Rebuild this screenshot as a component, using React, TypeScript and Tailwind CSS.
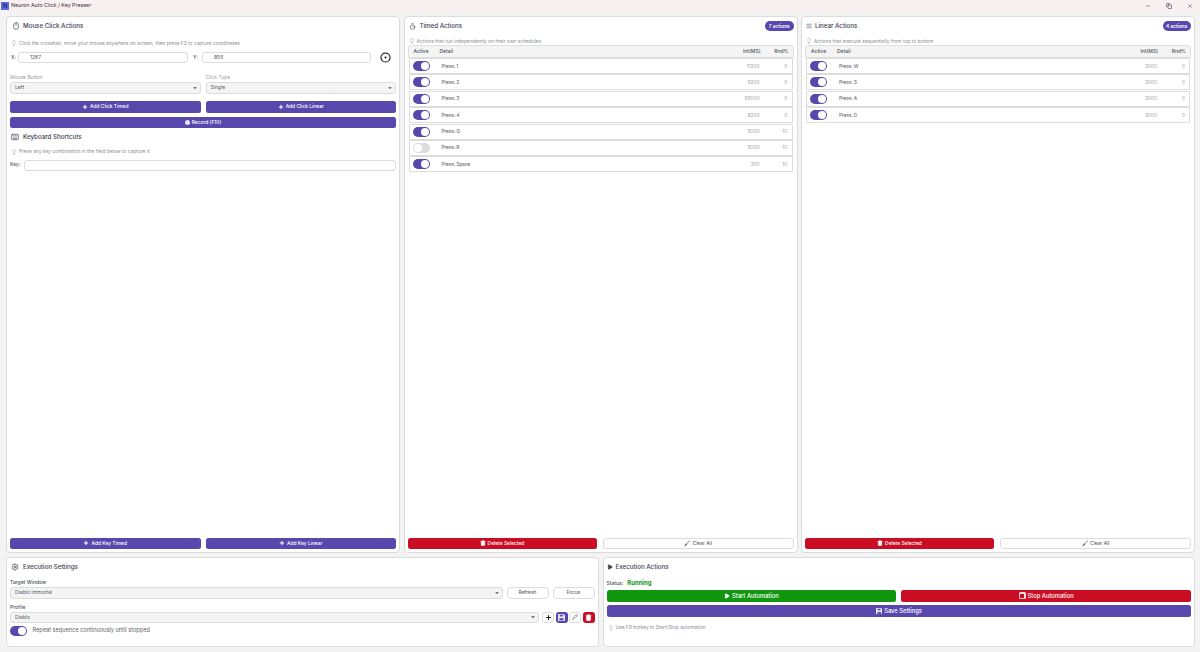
import {
  AlignJustify,
  CircleDot,
  Copy,
  Keyboard,
  Lightbulb,
  Minus,
  Mouse,
  Pencil,
  Play,
  Plus,
  Settings,
  Timer,
  Trash2,
  X,
} from "lucide-react";
import type { ReactNode } from "react";

type Row = { detail: string; interval: string; rnd: string; on?: boolean };

const timedRows: Row[] = [
  { detail: "Press: 1", interval: "11200", rnd: "0", on: true },
  { detail: "Press: 2", interval: "6200", rnd: "0", on: true },
  { detail: "Press: 3", interval: "55000", rnd: "0", on: true },
  { detail: "Press: 4", interval: "8200", rnd: "0", on: true },
  { detail: "Press: Q", interval: "5000", rnd: "10", on: true },
  { detail: "Press: R", interval: "5000", rnd: "10", on: false },
  { detail: "Press: Space", interval: "300", rnd: "10", on: true },
];

const linearRows: Row[] = [
  { detail: "Press: W", interval: "2000", rnd: "0", on: true },
  { detail: "Press: S", interval: "2000", rnd: "0", on: true },
  { detail: "Press: A", interval: "2000", rnd: "0", on: true },
  { detail: "Press: D", interval: "2000", rnd: "0", on: true },
];

function Toggle({ on = true }: { on?: boolean }) {
  return (
    <div
      className={
        on
          ? "flex h-[10px] w-[17px] shrink-0 items-center justify-end rounded-full bg-[#5848ae] pr-[1px]"
          : "flex h-[10px] w-[17px] shrink-0 items-center justify-start rounded-full bg-[#dddddd] pl-[1px]"
      }
    >
      <div className="h-[8px] w-[8px] rounded-full bg-white" />
    </div>
  );
}

function Hint({ children }: { children: ReactNode }) {
  return (
    <div className="flex items-center gap-[2px] text-[4.85px] leading-none text-[#8a8f96]">
      <Lightbulb className="h-[6px] w-[6px]" strokeWidth={1.5} />
      <span>{children}</span>
    </div>
  );
}

function CardTitle({ icon, title, iconWidth }: { icon: ReactNode; title: string; iconWidth: string }) {
  return (
    <div className="flex items-center text-[#3a4250]">
      <div className={`flex items-center ${iconWidth}`}>{icon}</div>
      <span className="text-[6.2px] font-medium leading-none">{title}</span>
    </div>
  );
}

function Action({ color, icon, label }: { color: string; icon: ReactNode; label: string }) {
  return (
    <button className={`flex h-[11.5px] min-w-0 flex-1 items-center justify-center gap-[2px] rounded-[2.5px] font-medium leading-none text-white ${color}`}>
      {icon}
      {label}
    </button>
  );
}

function Select({ value }: { value: string }) {
  return (
    <div className="flex h-[11.5px] min-w-0 flex-1 items-center justify-between rounded-[3px] border border-[#dcdcdc] bg-[#f4f4f4] pl-[4px] pr-[3px] text-[5px] leading-none text-[#555b63]">
      <span>{value}</span>
      <svg viewBox="0 0 6 4" className="h-[2.5px] w-[4px] text-[#777777]">
        <polygon points="0,0 6,0 3,4" fill="currentColor" />
      </svg>
    </div>
  );
}

function Outline({ children, className = "" }: { children: ReactNode; className?: string }) {
  return (
    <button className={`flex h-[11.5px] items-center justify-center gap-[2px] rounded-[3px] border border-[#dcdcdc] bg-white text-[4.9px] leading-none text-[#4a4f57] ${className}`}>
      {children}
    </button>
  );
}

function Floppy({ bg, size }: { bg: string; size: string }) {
  return (
    <svg viewBox="0 0 10 10" className={size}>
      <path d="M1 0h7l2 2v7a1 1 0 0 1-1 1H1a1 1 0 0 1-1-1V1a1 1 0 0 1 1-1z" fill="#eeecf8" />
      <rect x="2.5" y="1" width="4.5" height="2.5" fill={bg} />
      <rect x="2" y="6" width="6" height="3" fill={bg} />
    </svg>
  );
}

function Broom() {
  return (
    <svg viewBox="0 0 10 10" className="h-[6.5px] w-[6.5px] text-[#4a4f57]">
      <path d="M9 0.5L4 6" stroke="currentColor" strokeWidth="1" />
      <path d="M3.4 5L5 6.6L2 9.6L0.5 9.6z" fill="currentColor" />
    </svg>
  );
}

function ActionTable({ rows }: { rows: Row[] }) {
  return (
    <div className="mt-[1px] flex flex-col">
      <div className="flex h-[13px] items-center rounded-t-[3px] border border-[#dfdfdf] bg-[#f4f4f4] text-[5px] font-medium leading-none text-[#4a5059]">
        <span className="ml-[5px] w-[26px]">Active</span>
        <span className="flex-1">Detail</span>
        <span className="w-[30px] text-right">Int(MS)</span>
        <span className="mr-[4px] w-[28px] text-right">Rnd%</span>
      </div>
      {rows.map((r) => (
        <div key={r.detail} className="mx-[1px] mb-[0.4px] flex h-[16px] items-center rounded-[1px] border border-[#dcdcdc] bg-white text-[5px] leading-none">
          <div className="ml-[3px] w-[29px]">
            <Toggle on={r.on} />
          </div>
          <span className="flex-1 tracking-[-0.2px] text-[#5c6167]">{r.detail}</span>
          <span className="w-[30px] text-right tracking-[-0.1px] text-[#a2a5a9]">{r.interval}</span>
          <span className="mr-[4px] w-[28px] text-right text-[#a2a5a9]">{r.rnd}</span>
        </div>
      ))}
    </div>
  );
}

function ListCard({ icon, iconWidth, title, hint, rows, count }: { icon: ReactNode; iconWidth: string; title: string; hint: string; rows: Row[]; count: string }) {
  return (
    <section className="flex min-w-0 flex-1 flex-col rounded-[4px] border border-[#dcdcdc] bg-white px-[3px] pb-[3px] pt-[4px]">
      <div className="flex h-[10px] items-center justify-between pl-[1px]">
        <CardTitle icon={icon} iconWidth={iconWidth} title={title} />
        <span className="flex h-[10px] w-[28.5px] items-center justify-center rounded-full bg-[#5848ae] text-[4.8px] font-semibold leading-none text-white">{count}</span>
      </div>
      <div className="mt-[7px] pl-[1px]">
        <Hint>{hint}</Hint>
      </div>
      <ActionTable rows={rows} />
      <div className="mt-auto flex gap-[6px]">
        <Action
          color="bg-[#cb0d24] text-[4.9px]"
          icon={<Trash2 className="h-[6px] w-[6px] fill-current" strokeWidth={2} />}
          label="Delete Selected"
        />
        <Outline className="min-w-0 flex-1">
          <Broom />
          Clear All
        </Outline>
      </div>
    </section>
  );
}

export default function App() {
  const plus = <Plus className="h-[6px] w-[6px]" strokeWidth={4} />;

  return (
    <div className="flex h-[652px] w-[1200px] flex-col overflow-hidden bg-[#f3f3f3] font-['Inter',sans-serif] antialiased">
      {/* Title bar */}
      <header className="flex h-[11px] items-center bg-[#f9f1f1]">
        <div className="ml-[1px] flex h-[8px] w-[8px] items-center justify-center bg-[#5b6ee0] text-[6px] font-bold leading-none text-[#2a2f8f]">N</div>
        <span className="ml-[2px] text-[5.3px] leading-none text-[#333333]">Neuron Auto Click / Key Presser</span>
        <div className="ml-auto flex items-center gap-[15px] pr-[7px] text-[#444444]">
          <Minus className="h-[6px] w-[6px]" />
          <Copy className="h-[6px] w-[6px]" strokeWidth={2.5} />
          <X className="h-[6px] w-[6px]" />
        </div>
      </header>

      <main className="flex min-h-0 flex-1 flex-col gap-[4px] pb-[5px] pl-[6px] pr-[5px] pt-[5px]">
        <div className="flex min-h-0 flex-1 gap-[3.5px]">
          {/* Mouse click actions */}
          <section className="flex min-w-0 flex-1 flex-col rounded-[4px] border border-[#dcdcdc] bg-white px-[3px] pb-[3px] pt-[4px]">
            <div className="flex h-[10px] items-center pl-[2px]">
              <CardTitle icon={<Mouse className="h-[8px] w-[8px]" />} iconWidth="w-[11px]" title="Mouse Click Actions" />
            </div>
            <div className="mt-[9px] pl-[1px]">
              <Hint>Click the crosshair, move your mouse anywhere on screen, then press F2 to capture coordinates</Hint>
            </div>
            <div className="mt-[6px] flex items-center text-[5px] font-medium text-[#555b63]">
              <span className="w-[8px] pl-[1px]">X:</span>
              <div className="flex h-[11px] w-[170px] items-center rounded-[3px] border border-[#dcdcdc] pl-[11px] text-[5px] font-normal">1267</div>
              <span className="ml-[5px] w-[9px]">Y:</span>
              <div className="flex h-[11px] w-[169px] items-center rounded-[3px] border border-[#dcdcdc] pl-[11px] text-[5px] font-normal">855</div>
              <CircleDot className="ml-[9px] h-[11px] w-[11px] text-black" strokeWidth={2.2} />
            </div>
            <div className="mt-[12px] flex gap-[5px] text-[5px] leading-none text-[#9a9da2]">
              <span className="flex-1">Mouse Button</span>
              <span className="flex-1">Click Type</span>
            </div>
            <div className="mt-[2px] flex gap-[5px]">
              <Select value="Left" />
              <Select value="Single" />
            </div>
            <div className="mt-[7.5px] flex gap-[5px]">
              <Action color="bg-[#5848ae] text-[4.9px]" icon={plus} label="Add Click Timed" />
              <Action color="bg-[#5848ae] text-[4.9px]" icon={plus} label="Add Click Linear" />
            </div>
            <div className="mt-[4px] flex">
              <Action color="bg-[#5848ae] text-[4.9px]" icon={<span className="h-[5px] w-[5px] rounded-full bg-[#e6e3f5]" />} label="Record (F10)" />
            </div>
            <div className="mt-[4px] flex h-[10px] items-center pl-[1px]">
              <CardTitle icon={<Keyboard className="h-[8px] w-[8px]" />} iconWidth="w-[12px]" title="Keyboard Shortcuts" />
            </div>
            <div className="mt-[6.5px] pl-[1px]">
              <Hint>Press any key combination in the field below to capture it</Hint>
            </div>
            <div className="mt-[5px] flex items-center text-[5px] font-medium text-[#555b63]">
              <span className="w-[14px]">Key:</span>
              <div className="h-[11px] flex-1 rounded-[3px] border border-[#dcdcdc]" />
            </div>
            <div className="mt-auto flex gap-[5px]">
              <Action color="bg-[#5848ae] text-[4.9px]" icon={plus} label="Add Key Timed" />
              <Action color="bg-[#5848ae] text-[4.9px]" icon={plus} label="Add Key Linear" />
            </div>
          </section>

          <ListCard
            icon={<Timer className="h-[7px] w-[7px]" />}
            iconWidth="w-[11px]"
            title="Timed Actions"
            hint="Actions that run independently on their own schedules"
            rows={timedRows}
            count="7 actions"
          />
          <ListCard
            icon={<AlignJustify className="h-[6px] w-[6px]" />}
            iconWidth="w-[9px]"
            title="Linear Actions"
            hint="Actions that execute sequentially from top to bottom"
            rows={linearRows}
            count="4 actions"
          />
        </div>

        <div className="flex h-[90px] shrink-0 gap-[4px]">
          {/* Execution settings */}
          <section className="flex min-w-0 flex-1 flex-col rounded-[4px] border border-[#dcdcdc] bg-white px-[3px] pt-[4px]">
            <div className="flex h-[10px] items-center pl-[1px]">
              <CardTitle icon={<Settings className="h-[8px] w-[8px]" />} iconWidth="w-[12px]" title="Execution Settings" />
            </div>
            <span className="mt-[8px] text-[5px] font-medium leading-none text-[#4a5059]">Target Window</span>
            <div className="mt-[2px] flex items-center gap-[4px]">
              <Select value="Diablo Immortal" />
              <Outline className="w-[42px] rounded-[4px]">Refresh</Outline>
              <Outline className="w-[42px] rounded-[4px]">Focus</Outline>
            </div>
            <span className="mt-[6px] text-[5px] font-medium leading-none text-[#4a5059]">Profile</span>
            <div className="mt-[2px] flex items-center gap-[1.5px]">
              <Select value="Diablo" />
              <div className="ml-[1.5px] flex h-[11.5px] w-[12px] items-center justify-center rounded-[3px] border border-[#dcdcdc] text-[#222222]">
                <Plus className="h-[7px] w-[7px]" strokeWidth={3.5} />
              </div>
              <div className="flex h-[11.5px] w-[12px] items-center justify-center rounded-[3px] bg-[#5848ae]">
                <Floppy bg="#5848ae" size="h-[7px] w-[7px]" />
              </div>
              <div className="flex h-[11.5px] w-[12px] items-center justify-center rounded-[3px] border border-[#dcdcdc] text-[#555555]">
                <Pencil className="h-[6px] w-[6px]" />
              </div>
              <div className="flex h-[11.5px] w-[12px] items-center justify-center rounded-[3px] bg-[#cb0d24] text-white">
                <Trash2 className="h-[7px] w-[7px] fill-current" strokeWidth={2} />
              </div>
            </div>
            <div className="mt-[3px] flex items-center gap-[5.5px]">
              <Toggle />
              <span className="text-[5.6px] leading-none text-[#5c6167]">Repeat sequence continuously until stopped</span>
            </div>
          </section>

          {/* Execution actions */}
          <section className="flex min-w-0 flex-1 flex-col rounded-[4px] border border-[#dcdcdc] bg-white px-[3px] pt-[4px]">
            <div className="flex h-[10px] items-center">
              <CardTitle icon={<Play className="h-[6px] w-[6px] fill-current" />} iconWidth="w-[9px]" title="Execution Actions" />
            </div>
            <div className="mt-[8px] flex items-center gap-[4px] leading-none">
              <span className="text-[5px] font-medium text-[#4a5059]">Status:</span>
              <span className="text-[6px] font-bold text-[#119610]">Running</span>
            </div>
            <div className="mt-[4px] flex gap-[5px]">
              <Action color="bg-[#119610] text-[5.8px]" icon={<Play className="h-[6px] w-[6px] fill-current" />} label="Start Automation" />
              <Action
                color="bg-[#cb0d24] text-[5.8px]"
                icon={
                  <span className="flex h-[7px] w-[7px] items-center justify-center rounded-[1.5px] bg-[#f6dfe2]">
                    <span className="h-[3.5px] w-[3.5px] bg-[#cb0d24]" />
                  </span>
                }
                label="Stop Automation"
              />
            </div>
            <div className="mt-[3.5px] flex">
              <Action color="bg-[#5848ae] text-[5.8px]" icon={<Floppy bg="#5848ae" size="h-[6.5px] w-[6.5px]" />} label="Save Settings" />
            </div>
            <div className="mt-[8px] pl-[1px]">
              <Hint>Use F9 hotkey to Start/Stop automation</Hint>
            </div>
          </section>
        </div>
      </main>
    </div>
  );
}
